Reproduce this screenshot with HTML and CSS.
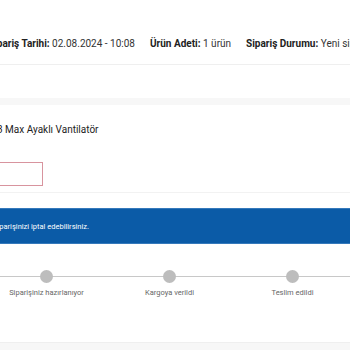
FILE: index.html
```html
<!DOCTYPE html>
<html>
  <head>
    <title>Sipariş Detayı</title>
    <link rel="stylesheet" href="styles.css">
  </head>
  <body>
    <div class="page">
      <div class="order-meta">
        <span class="meta-item"><b>Sipariş Tarihi:</b> 02.08.2024 - 10:08</span>
        <span class="meta-item"><b>Ürün Adeti:</b> 1 ürün</span>
        <span class="meta-item"><b>Sipariş Durumu:</b> Yeni sipariş</span>
      </div>

      <div class="divider"></div>

      <div class="product">
        <div class="product-name">3 Max Ayaklı Vantilatör</div>
        <div class="cancel-box"></div>
      </div>

      <div class="notice">
        <span class="notice-text">Siparişinizi iptal edebilirsiniz.</span>
      </div>

      <div class="timeline">
        <div class="step"><span class="dot"></span><span class="step-label">Sipariş alındı</span></div>
        <div class="step"><span class="dot"></span><span class="step-label">Siparişiniz hazırlanıyor</span></div>
        <div class="step"><span class="dot"></span><span class="step-label">Kargoya verildi</span></div>
        <div class="step"><span class="dot"></span><span class="step-label">Teslim edildi</span></div>
        <div class="step"><span class="dot"></span><span class="step-label">Tamamlandı</span></div>
      </div>

      <div class="footer-band"></div>
    </div>
  </body>
</html>
```

FILE: styles.css
```css
:root {
  --blue: #0b5ba7;
  --text-primary: #222;
  --text-secondary: #666;
  --line: #c8c8c8;
  --band: #f7f7f7;
}

html,
body {
  margin: 0;
  background: white;
  overflow: hidden;
}

body {
  font-family: Roboto, "Noto Sans", sans-serif;
  color: var(--text-primary);
}

.page {
  width: 350px;
  height: 350px;
  overflow: hidden;
}

.order-meta {
  display: flex;
  align-items: flex-end;
  gap: 15px;
  height: 65px;
  box-sizing: border-box;
  padding-bottom: 14px;
  border-bottom: 1px solid #efefef;
  margin-left: -12px;
  font-size: 10px;
  line-height: 12px;
  white-space: nowrap;
  color: #333;
}

.meta-item b {
  font-weight: 700;
  color: #222;
}

.divider {
  height: 7px;
  margin-top: 33px;
  background: var(--band);
}

.product {
  display: flex;
  flex-direction: column;
  gap: 26px;
  padding-top: 18px;
  height: 88px;
  box-sizing: border-box;
  border-bottom: 1px solid #f2f2f2;
}

.product-name {
  margin-left: -3px;
  font-size: 10px;
  line-height: 13px;
  white-space: nowrap;
}

.cancel-box {
  width: 43px;
  height: 24px;
  box-sizing: border-box;
  border: 1px solid #d8949e;
  border-left: none;
}

.notice {
  display: flex;
  align-items: center;
  height: 36px;
  box-sizing: border-box;
  margin-top: 15px;
  background: var(--blue);
  border-top: 1px solid #3579bb;
  border-bottom: 1px solid #3579bb;
  color: white;
  font-size: 7.5px;
  white-space: nowrap;
}

.notice-text {
  margin-left: -7px;
}

.timeline {
  position: relative;
  display: grid;
  grid-template-columns: repeat(5, 123px);
  margin-left: -138px;
  margin-top: 26px;
  height: 72px;
}

.timeline::before {
  content: "";
  position: absolute;
  left: 0;
  right: 0;
  top: 6px;
  height: 1px;
  background: var(--line);
}

.step {
  position: relative;
  display: flex;
  flex-direction: column;
  align-items: center;
  gap: 5px;
}

.dot {
  width: 13px;
  height: 13px;
  border-radius: 50%;
  background: #bdbdbd;
}

.step-label {
  font-size: 7.5px;
  color: var(--text-secondary);
  white-space: nowrap;
}

.footer-band {
  height: 10px;
  border-top: 1px solid #efefef;
  background: var(--band);
}
```
